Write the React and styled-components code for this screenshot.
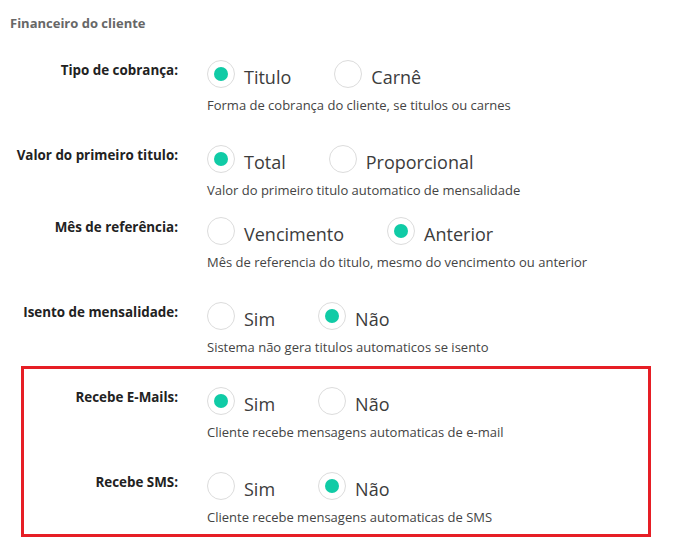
import React from 'react';
import styled, { createGlobalStyle } from 'styled-components';

const GlobalStyle = createGlobalStyle`
  body {
    margin: 0;
    background: #fff;
    font-family: "Open Sans", "Liberation Sans", sans-serif;
  }
`;

const Page = styled.div`
  padding: 14px 0 0 10px;
  width: 700px;
  box-sizing: border-box;
`;

const SectionTitle = styled.div`
  font-size: 13px;
  line-height: 18px;
  font-weight: 700;
  color: #676767;
  margin-bottom: 28px;
`;

const Row = styled.div`
  display: grid;
  grid-template-columns: 168px 1fr;
  column-gap: 29px;
  margin-bottom: ${(p) => p.$gap}px;

  &:last-child {
    margin-bottom: 0;
  }
`;

const Label = styled.div`
  text-align: right;
  font-size: 13.4px;
  line-height: 18px;
  font-weight: 700;
  color: #222;
  padding-top: 1px;
  white-space: nowrap;
`;

const Options = styled.div`
  display: flex;
  align-items: center;
  height: 28px;
`;

const Option = styled.label`
  display: flex;
  align-items: center;
  margin-right: 43px;
  cursor: pointer;
`;

const Circle = styled.span`
  box-sizing: border-box;
  width: 28px;
  height: 28px;
  border-radius: 50%;
  border: 1px solid #dcdcdc;
  display: flex;
  align-items: center;
  justify-content: center;

  &::after {
    content: '';
    width: 14px;
    height: 14px;
    border-radius: 50%;
    background: ${(p) => (p.$checked ? '#10cba6' : 'transparent')};
  }
`;

const OptionText = styled.span`
  font-size: 18px;
  color: #3c3c3c;
  margin-left: 9px;
  padding-top: 5px;
`;

const Help = styled.div`
  font-size: 13px;
  line-height: 18px;
  color: #444;
  margin-top: 8px;
`;

const Highlight = styled.div`
  box-sizing: border-box;
  width: 630px;
  margin-left: 11px;
  border: 3px solid #e61e25;
  padding: 18px 0 8px;

  ${Row} {
    grid-template-columns: 154px 1fr;
  }
`;

const Field = ({ label, options, value, help, gap = 31 }) => (
  <Row $gap={gap}>
    <Label>{label}</Label>
    <div>
      <Options>
        {options.map((o) => (
          <Option key={o}>
            <Circle $checked={o === value} />
            <OptionText>{o}</OptionText>
          </Option>
        ))}
      </Options>
      <Help>{help}</Help>
    </div>
  </Row>
);

export default function App() {
  return (
    <Page>
      <GlobalStyle />
      <SectionTitle>Financeiro do cliente</SectionTitle>
      <Field
        label="Tipo de cobrança:"
        options={['Titulo', 'Carnê']}
        value="Titulo"
        help="Forma de cobrança do cliente, se titulos ou carnes"
      />
      <Field
        label="Valor do primeiro titulo:"
        options={['Total', 'Proporcional']}
        value="Total"
        help="Valor do primeiro titulo automatico de mensalidade"
        gap={18}
      />
      <Field
        label="Mês de referência:"
        options={['Vencimento', 'Anterior']}
        value="Anterior"
        help="Mês de referencia do titulo, mesmo do vencimento ou anterior"
      />
      <Field
        label="Isento de mensalidade:"
        options={['Sim', 'Não']}
        value="Não"
        help="Sistema não gera titulos automaticos se isento"
        gap={10}
      />
      <Highlight>
        <Field
          label="Recebe E-Mails:"
          options={['Sim', 'Não']}
          value="Sim"
          help="Cliente recebe mensagens automaticas de e-mail"
        />
        <Field
          label="Recebe SMS:"
          options={['Sim', 'Não']}
          value="Não"
          help="Cliente recebe mensagens automaticas de SMS"
        />
      </Highlight>
    </Page>
  );
}
